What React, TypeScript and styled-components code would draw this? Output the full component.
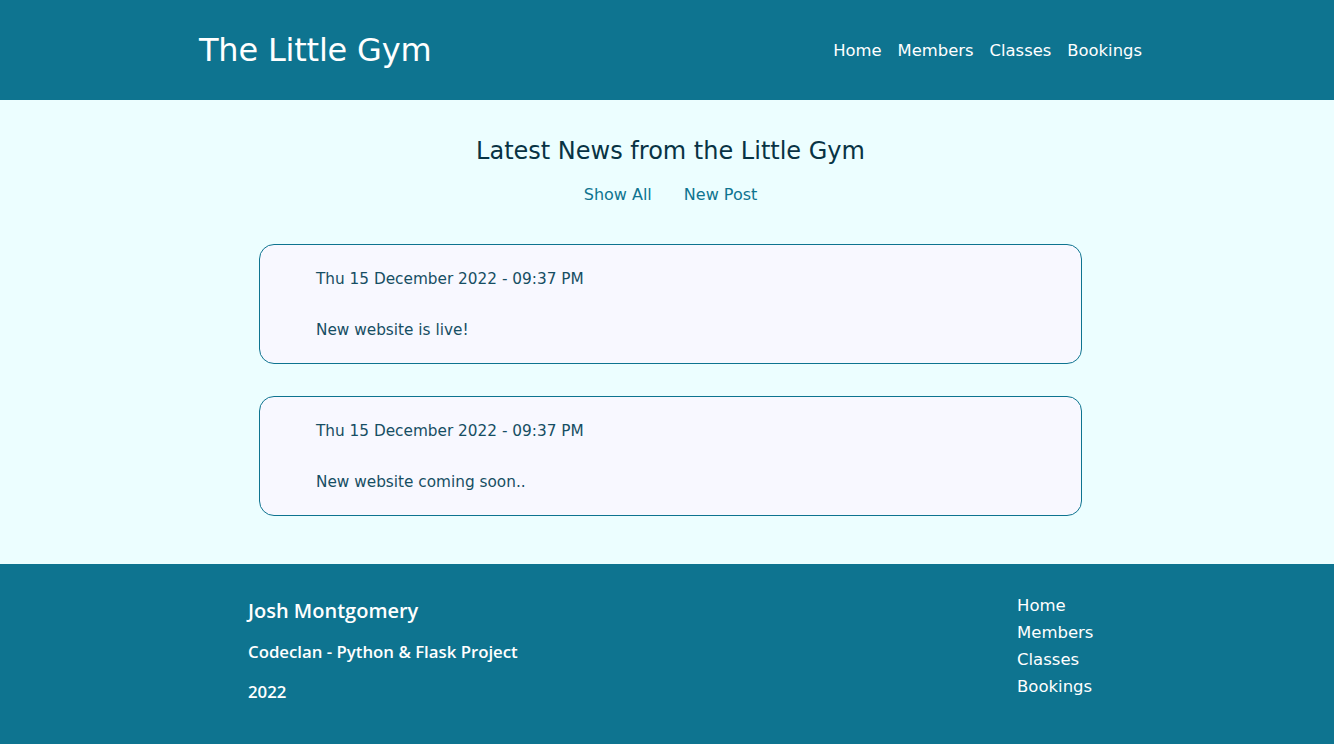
import styled, { createGlobalStyle } from 'styled-components'

const GlobalStyle = createGlobalStyle`
  * {
    box-sizing: border-box;
  }

  body {
    margin: 0;
    font-family: "DejaVu Sans", "Open Sans", sans-serif;
    background-color: #ecfeff;
  }
`

const Header = styled.header`
  background-color: #0e7490;
  height: 100px;
  display: flex;
  align-items: center;
  justify-content: space-between;
  padding: 0 192px 0 199px;
`

const Brand = styled.h1`
  margin: 0;
  color: #ffffff;
  font-size: 32px;
  font-weight: 500;
  letter-spacing: -0.2px;
`

const NavList = styled.nav`
  display: flex;
  gap: 16px;

  a {
    color: #ffffff;
    text-decoration: none;
    font-size: 16.4px;
  }
`

const Main = styled.main`
  padding: 36px 0 48px 7px;
  display: flex;
  flex-direction: column;
  align-items: center;
`

const PageTitle = styled.h2`
  margin: 0;
  color: #083344;
  font-size: 24px;
  font-weight: 500;
  line-height: 30px;
`

const SubNav = styled.div`
  display: flex;
  gap: 32px;
  margin-top: 19px;

  a {
    color: #0e7490;
    text-decoration: none;
    font-size: 16px;
    line-height: 20px;
  }
`

const PostList = styled.div`
  display: flex;
  flex-direction: column;
  gap: 32px;
  margin-top: 39px;
  width: 823px;
`

const Post = styled.article`
  background-color: #f8f8ff;
  border: 1px solid #0e7490;
  border-radius: 15px;
  padding: 24px 56px 23px;
  color: #164e63;
  font-size: 15.3px;
  line-height: 20px;
`

const PostBody = styled.p`
  margin: 31px 0 0;
`

const PostDate = styled.p`
  margin: 0;
`

const Footer = styled.footer`
  background-color: #0e7490;
  height: 180px;
  display: grid;
  grid-template-columns: 1fr 120px;
  align-items: start;
  padding: 28px 197px 0 248px;
  color: #ffffff;
`

const FooterInfo = styled.div`
  display: flex;
  flex-direction: column;
  padding-top: 7px;
  font-family: "Open Sans", "DejaVu Sans", sans-serif;
`

const FooterLine = styled.p<{ $size: number; $gap: number }>`
  margin: ${props => props.$gap}px 0 0;
  font-size: ${props => props.$size}px;
  font-weight: 600;
  line-height: 24px;
`

const FooterLinks = styled.div`
  display: flex;
  flex-direction: column;

  a {
    color: #ffffff;
    text-decoration: none;
    font-size: 16.5px;
    line-height: 27px;
  }
`

const links = ['Home', 'Members', 'Classes', 'Bookings']

const posts = [
  { date: 'Thu 15 December 2022 - 09:37 PM', body: 'New website is live!' },
  { date: 'Thu 15 December 2022 - 09:37 PM', body: 'New website coming soon..' },
]

export default function App() {
  return (
    <>
      <GlobalStyle />
      <Header>
        <Brand>The Little Gym</Brand>
        <NavList>
          {links.map(l => (
            <a key={l} href="#">{l}</a>
          ))}
        </NavList>
      </Header>
      <Main>
        <PageTitle>Latest News from the Little Gym</PageTitle>
        <SubNav>
          <a href="#">Show All</a>
          <a href="#">New Post</a>
        </SubNav>
        <PostList>
          {posts.map((p, i) => (
            <Post key={i}>
              <PostDate>{p.date}</PostDate>
              <PostBody>{p.body}</PostBody>
            </Post>
          ))}
        </PostList>
      </Main>
      <Footer>
        <FooterInfo>
          <FooterLine $size={20} $gap={0}>Josh Montgomery</FooterLine>
          <FooterLine $size={16.8} $gap={17}>Codeclan - Python &amp; Flask Project</FooterLine>
          <FooterLine $size={16.8} $gap={16}>2022</FooterLine>
        </FooterInfo>
        <FooterLinks>
          {links.map(l => (
            <a key={l} href="#">{l}</a>
          ))}
        </FooterLinks>
      </Footer>
    </>
  )
}
